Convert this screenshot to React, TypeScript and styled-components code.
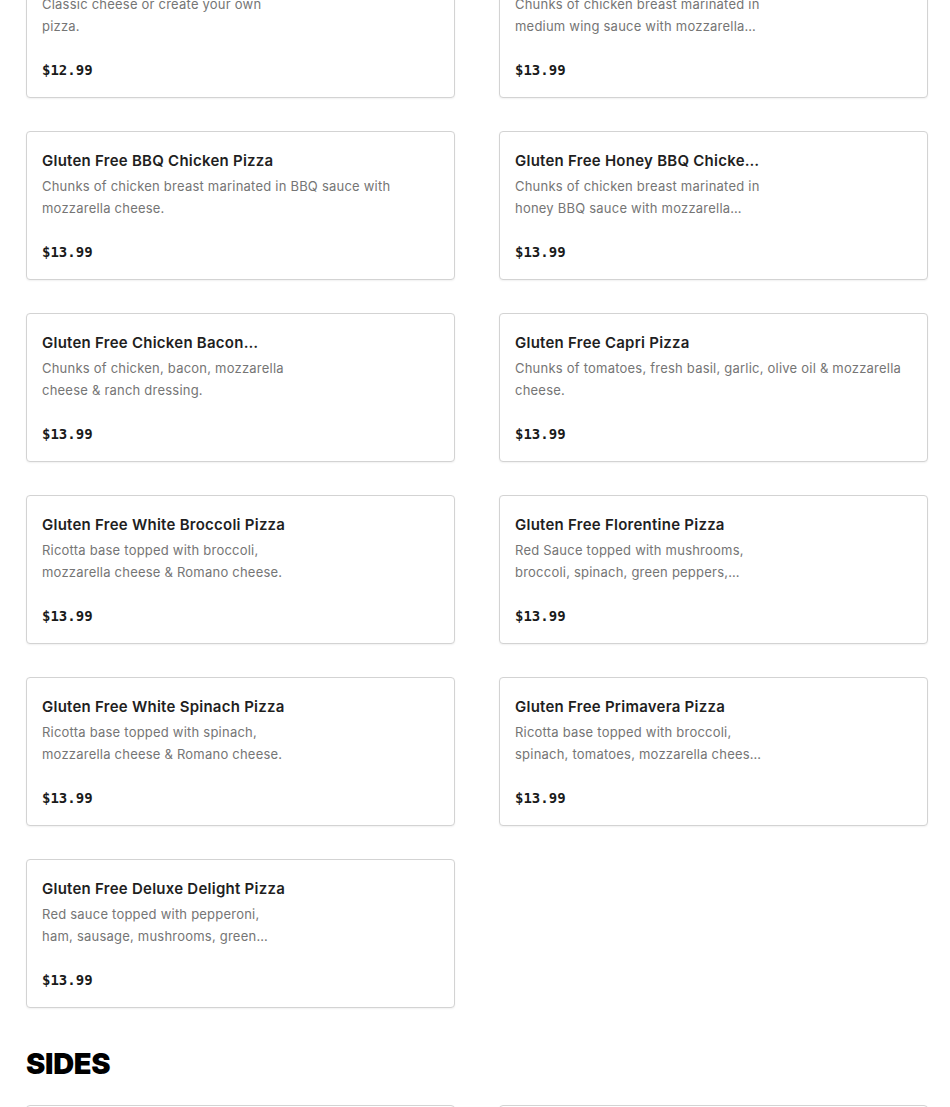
import styled, { createGlobalStyle } from 'styled-components';

type MenuItem = {
  name: string;
  description: string;
  price: string;
  hasImage?: boolean;
};

const PIZZAS: MenuItem[] = [
  {
    name: 'Gluten Free Cheese Pizza',
    description: 'Classic cheese or create your own pizza.',
    price: '$12.99',
    hasImage: true,
  },
  {
    name: 'Gluten Free Buffalo Chicken Pizza',
    description: 'Chunks of chicken breast marinated in medium wing sauce with mozzarella cheese.',
    price: '$13.99',
    hasImage: true,
  },
  {
    name: 'Gluten Free BBQ Chicken Pizza',
    description: 'Chunks of chicken breast marinated in BBQ sauce with mozzarella cheese.',
    price: '$13.99',
  },
  {
    name: 'Gluten Free Honey BBQ Chicken Pizza',
    description: 'Chunks of chicken breast marinated in honey BBQ sauce with mozzarella cheese.',
    price: '$13.99',
    hasImage: true,
  },
  {
    name: 'Gluten Free Chicken Bacon Ranch Pizza',
    description: 'Chunks of chicken, bacon, mozzarella cheese & ranch dressing.',
    price: '$13.99',
    hasImage: true,
  },
  {
    name: 'Gluten Free Capri Pizza',
    description: 'Chunks of tomatoes, fresh basil, garlic, olive oil & mozzarella cheese.',
    price: '$13.99',
  },
  {
    name: 'Gluten Free White Broccoli Pizza',
    description: 'Ricotta base topped with broccoli, mozzarella cheese & Romano cheese.',
    price: '$13.99',
    hasImage: true,
  },
  {
    name: 'Gluten Free Florentine Pizza',
    description: 'Red Sauce topped with mushrooms, broccoli, spinach, green peppers, onions & mozzarella cheese.',
    price: '$13.99',
    hasImage: true,
  },
  {
    name: 'Gluten Free White Spinach Pizza',
    description: 'Ricotta base topped with spinach, mozzarella cheese & Romano cheese.',
    price: '$13.99',
    hasImage: true,
  },
  {
    name: 'Gluten Free Primavera Pizza',
    description: 'Ricotta base topped with broccoli, spinach, tomatoes, mozzarella cheese & Romano cheese.',
    price: '$13.99',
    hasImage: true,
  },
  {
    name: 'Gluten Free Deluxe Delight Pizza',
    description: 'Red sauce topped with pepperoni, ham, sausage, mushrooms, green peppers, onions & mozzarella cheese.',
    price: '$13.99',
    hasImage: true,
  },
];

const SIDES: MenuItem[] = [
  { name: 'Garlic Knots', description: 'Six knots tossed in garlic butter.', price: '$5.99' },
  { name: 'French Fries', description: 'Crispy golden fries.', price: '$4.99' },
];

const GlobalStyle = createGlobalStyle`
  html, body {
    margin: 0;
    padding: 0;
    background: #fff;
    overflow: hidden;
  }

  body {
    font-family: Inter, 'Liberation Sans', Arial, sans-serif;
    color: #191919;
  }
`;

// page is shown scrolled part-way into the pizza section
const Page = styled.main`
  padding: 0 22px 0 26px;
  margin-top: -51px;
`;

const Grid = styled.div`
  display: grid;
  grid-template-columns: 1fr 1fr;
  column-gap: 44px;
  row-gap: 33px;
`;

const Card = styled.article`
  border: 1px solid #d3d3d3;
  border-radius: 4px;
  box-shadow: 0 1px 2px rgba(0, 0, 0, 0.06);
  padding: 17px 15px 16px;
  background: #fff;
  cursor: pointer;
`;

const Info = styled.div<{ $narrow?: boolean }>`
  max-width: ${(p) => (p.$narrow ? '248px' : 'none')};
`;

const Name = styled.h3`
  margin: 0 0 3px;
  font-size: 15px;
  line-height: 23px;
  font-weight: 600;
  letter-spacing: 0.25px;
  color: #1f1f1f;
  display: -webkit-box;
  -webkit-line-clamp: 1;
  -webkit-box-orient: vertical;
  overflow: hidden;
`;

const Description = styled.p`
  margin: 0;
  font-size: 13px;
  line-height: 22px;
  letter-spacing: 0.22px;
  color: #757575;
  min-height: 44px;
  display: -webkit-box;
  -webkit-line-clamp: 2;
  -webkit-box-orient: vertical;
  overflow: hidden;
`;

const Price = styled.div`
  margin-top: 22px;
  font-family: 'DejaVu Sans Mono', 'Liberation Mono', monospace;
  font-size: 14px;
  font-weight: 700;
  line-height: 22px;
  color: #1a1a1a;
`;

const SectionTitle = styled.h2`
  margin: 40px 0 25px;
  font-family: Inter, 'Liberation Sans', Arial, sans-serif;
  font-size: 29px;
  line-height: 32px;
  font-weight: 900;
  letter-spacing: -0.3px;
  color: #000;
`;

const MenuCard = ({ item }: { item: MenuItem }) => (
  <Card>
    <Info $narrow={item.hasImage}>
      <Name>{item.name}</Name>
      <Description>{item.description}</Description>
      <Price>{item.price}</Price>
    </Info>
  </Card>
);

export default function App() {
  return (
    <>
      <GlobalStyle />
      <Page>
        <Grid>
          {PIZZAS.map((item) => (
            <MenuCard item={item} key={item.name} />
          ))}
        </Grid>
        <SectionTitle>SIDES</SectionTitle>
        <Grid>
          {SIDES.map((item) => (
            <MenuCard item={item} key={item.name} />
          ))}
        </Grid>
      </Page>
    </>
  );
}
